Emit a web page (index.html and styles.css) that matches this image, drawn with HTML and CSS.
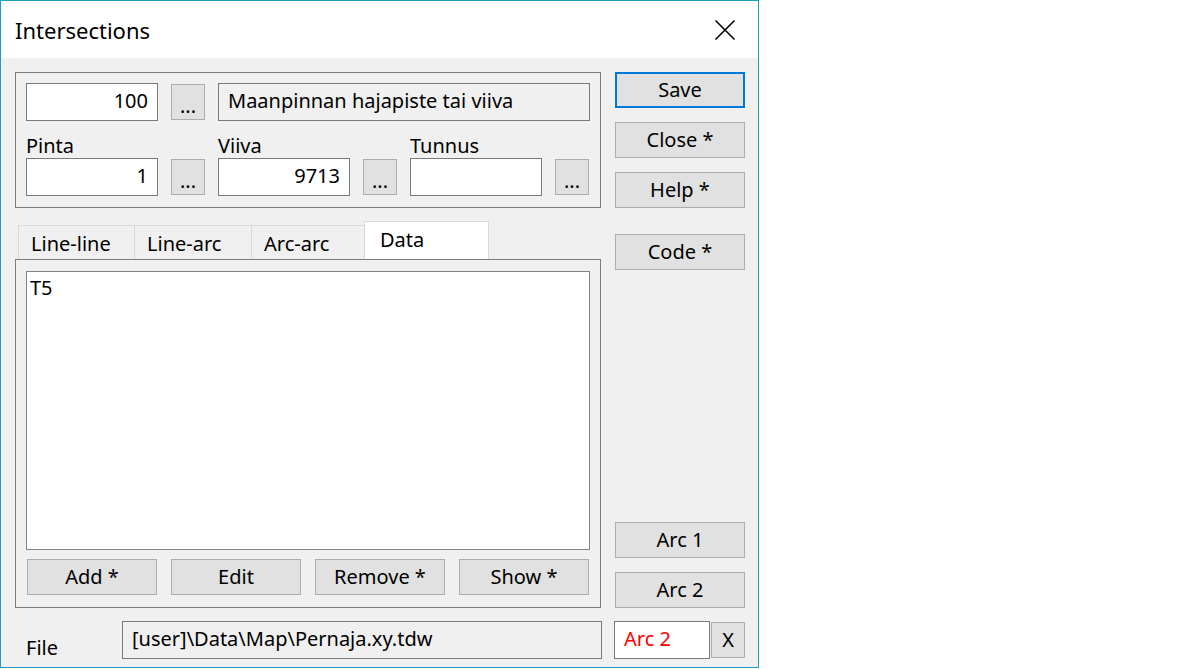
FILE: index.html
```html
<!DOCTYPE html>
<html lang="en">
<head>
    <meta charset="UTF-8">
    <title>Intersections</title>
    <link rel="stylesheet" href="styles.css">
</head>
<body>
    <div class="window">
        <div class="titlebar">
            <span class="title">Intersections</span>
            <svg class="close-x" width="22" height="22" viewBox="0 0 22 22">
                <path d="M1.5 1.5 L20.5 20.5 M20.5 1.5 L1.5 20.5" stroke="#000" stroke-width="1.6" fill="none"/>
            </svg>
        </div>
        <div class="client">
            <div class="main">
                <div class="left">
                    <div class="group">
                        <div class="row">
                            <div class="field num">100</div>
                            <div class="btn dots">...</div>
                            <div class="field desc">Maanpinnan hajapiste tai viiva</div>
                        </div>
                        <div class="row fields">
                            <div class="fgroup">
                                <label>Pinta</label>
                                <div class="pair">
                                    <div class="field num">1</div>
                                    <div class="btn dots">...</div>
                                </div>
                            </div>
                            <div class="fgroup">
                                <label>Viiva</label>
                                <div class="pair">
                                    <div class="field num">9713</div>
                                    <div class="btn dots">...</div>
                                </div>
                            </div>
                            <div class="fgroup">
                                <label>Tunnus</label>
                                <div class="pair">
                                    <div class="field num"></div>
                                    <div class="btn dots">...</div>
                                </div>
                            </div>
                        </div>
                    </div>
                    <div class="tabs">
                        <div class="tab t1">Line-line</div>
                        <div class="tab t2">Line-arc</div>
                        <div class="tab t3">Arc-arc</div>
                        <div class="tab active">Data</div>
                    </div>
                    <div class="panel">
                        <div class="list">T5</div>
                        <div class="list-btns">
                            <div class="btn">Add *</div>
                            <div class="btn">Edit</div>
                            <div class="btn">Remove *</div>
                            <div class="btn">Show *</div>
                        </div>
                    </div>
                </div>
                <div class="right">
                    <div class="btn save">Save</div>
                    <div class="btn">Close *</div>
                    <div class="btn">Help *</div>
                    <div class="btn code">Code *</div>
                    <div class="spacer"></div>
                    <div class="btn">Arc 1</div>
                    <div class="btn">Arc 2</div>
                </div>
            </div>
            <div class="bottom">
                <span class="file-label">File</span>
                <div class="field path">[user]\Data\Map\Pernaja.xy.tdw</div>
                <div class="field arc">Arc 2</div>
                <div class="btn xbtn">X</div>
            </div>
        </div>
    </div>
</body>
</html>
```

FILE: styles.css
```css
* {
    margin: 0;
    padding: 0;
    box-sizing: border-box;
}
body {
    background: #ffffff;
    font-family: "Noto Sans", "Open Sans", sans-serif;
    font-size: 20px;
    color: #000;
}
.window {
    width: 759px;
    height: 668px;
    border: 1px solid #1c9fc3;
    display: flex;
    flex-direction: column;
}
.titlebar {
    height: 57px;
    background: #ffffff;
    display: flex;
    align-items: center;
    justify-content: space-between;
    padding: 0 22px 0 14px;
}
.title {
    font-size: 22px;
    margin-top: 1px;
}
.close-x {
    margin-top: 1px;
}
.client {
    flex: 1;
    background: #f0f0f0;
    padding: 14px 13px 0 14px;
    display: flex;
    flex-direction: column;
}
.main {
    display: flex;
    gap: 14px;
}
.left {
    width: 586px;
    display: flex;
    flex-direction: column;
}
.group {
    height: 136px;
    border: 1px solid #7c7c7c;
    padding: 10px 10px 0 10px;
}
.row {
    display: flex;
    align-items: center;
    gap: 13px;
}
.field {
    height: 38px;
    background: #fff;
    border: 1px solid #7a7a7a;
    display: flex;
    align-items: center;
    padding: 0 9px 4px 9px;
    white-space: nowrap;
}
.num {
    width: 132px;
    justify-content: flex-end;
}
.desc {
    width: 372px;
    background: #f0f0f0;
}
.btn {
    height: 36px;
    background: #e1e1e1;
    border: 1px solid #adadad;
    display: flex;
    align-items: center;
    justify-content: center;
    padding-bottom: 2px;
    white-space: nowrap;
}
.dots {
    width: 34px;
    padding: 6px 0 0 0;
}
.fields {
    gap: 13px;
}
.fgroup {
    display: flex;
    flex-direction: column;
}
.fgroup label {
    height: 37px;
    display: flex;
    align-items: flex-end;
    line-height: 1;
    padding-bottom: 2px;
}
.pair {
    display: flex;
    align-items: center;
    gap: 13px;
}
.tabs {
    display: flex;
    align-items: flex-end;
    height: 51px;
    padding-left: 3px;
}
.tab {
    height: 34px;
    border: 1px solid #d9d9d9;
    border-bottom: none;
    background: #f0f0f0;
    padding: 4px 0 0 12px;
    margin-right: -1px;
}
.t1 { width: 117px; }
.t2 { width: 118px; }
.t3 { width: 115px; }
.tab.active {
    height: 38px;
    width: 125px;
    background: #fff;
    padding: 4px 0 0 15px;
    margin-left: -1px;
}
.panel {
    height: 349px;
    border: 1px solid #7c7c7c;
    padding: 11px 10px 0 10px;
}
.list {
    height: 279px;
    background: #fff;
    border: 1px solid #828282;
    padding: 2px 3px;
}
.list-btns {
    display: flex;
    gap: 14px;
    margin-top: 9px;
    padding-left: 1px;
}
.list-btns .btn {
    width: 130px;
}
.right {
    width: 130px;
    display: flex;
    flex-direction: column;
    gap: 14px;
}
.right .btn {
    width: 130px;
}
.save {
    border: 2px solid #0078d7;
}
.code {
    margin-top: 12px;
}
.spacer {
    flex: 1;
}
.bottom {
    display: flex;
    align-items: center;
    margin-top: 13px;
    height: 38px;
}
.file-label {
    width: 107px;
    padding-left: 11px;
    margin-top: 14px;
}
.path {
    width: 480px;
    background: #f0f0f0;
    margin-right: 12px;
}
.arc {
    width: 96px;
    color: #ff0000;
    margin-right: 1px;
}
.xbtn {
    width: 34px;
}
```
